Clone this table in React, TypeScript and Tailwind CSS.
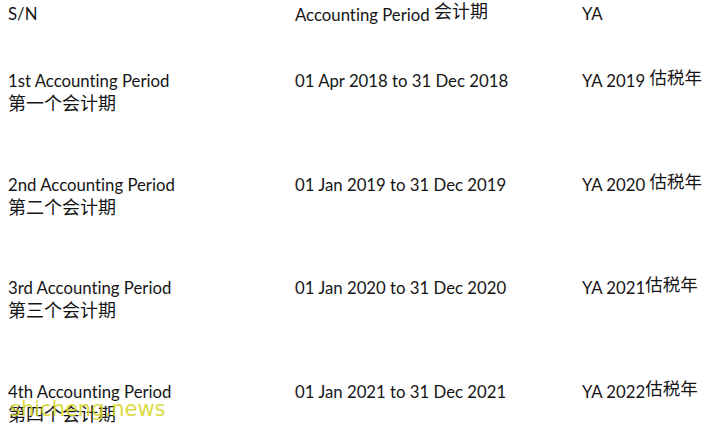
import React from "react";

const rows = [
  { en: "1st Accounting Period", zh: "第一个会计期", period: "01 Apr 2018 to 31 Dec 2018", ya: "YA 2019 ", yaZh: "估税年" },
  { en: "2nd Accounting Period", zh: "第二个会计期", period: "01 Jan 2019 to 31 Dec 2019", ya: "YA 2020 ", yaZh: "估税年" },
  { en: "3rd Accounting Period", zh: "第三个会计期", period: "01 Jan 2020 to 31 Dec 2020", ya: "YA 2021", yaZh: "估税年" },
  { en: "4th Accounting Period", zh: "第四个会计期", period: "01 Jan 2021 to 31 Dec 2021", ya: "YA 2022", yaZh: "估税年" },
];

export default function App() {
  return (
    <div
      className="relative w-[705px] h-[428px] overflow-hidden bg-white pl-2 pt-[3px] text-[16.75px] leading-[22px] text-[#151515] [font-variant-ligatures:none]"
      style={{ fontFamily: 'Lato, "Noto Sans CJK SC", sans-serif' }}
    >
      <div className="grid grid-cols-[287px_287px_1fr] h-[67px]">
        <div>S/N</div>
        <div>
          Accounting Period <span className="relative -top-[3px] text-[18px]">会计期</span>
        </div>
        <div>YA</div>
      </div>
      {rows.map((r) => (
        <div key={r.en} className="grid grid-cols-[287px_287px_1fr] h-[103.5px]">
          <div className="flex flex-col">
            <span>{r.en}</span>
            <span className="text-[18px]">{r.zh}</span>
          </div>
          <div>{r.period}</div>
          <div className="whitespace-nowrap">
            {r.ya}
            <span className="relative -top-[3px] text-[17.5px]">{r.yaZh}</span>
          </div>
        </div>
      ))}
      <div
        className="absolute left-[10px] top-[397px] text-[21px] leading-[24px] text-[#d8d628]/90"
        style={{ fontFamily: '"DejaVu Sans", sans-serif' }}
      >
        shicheng.news
      </div>
    </div>
  );
}
